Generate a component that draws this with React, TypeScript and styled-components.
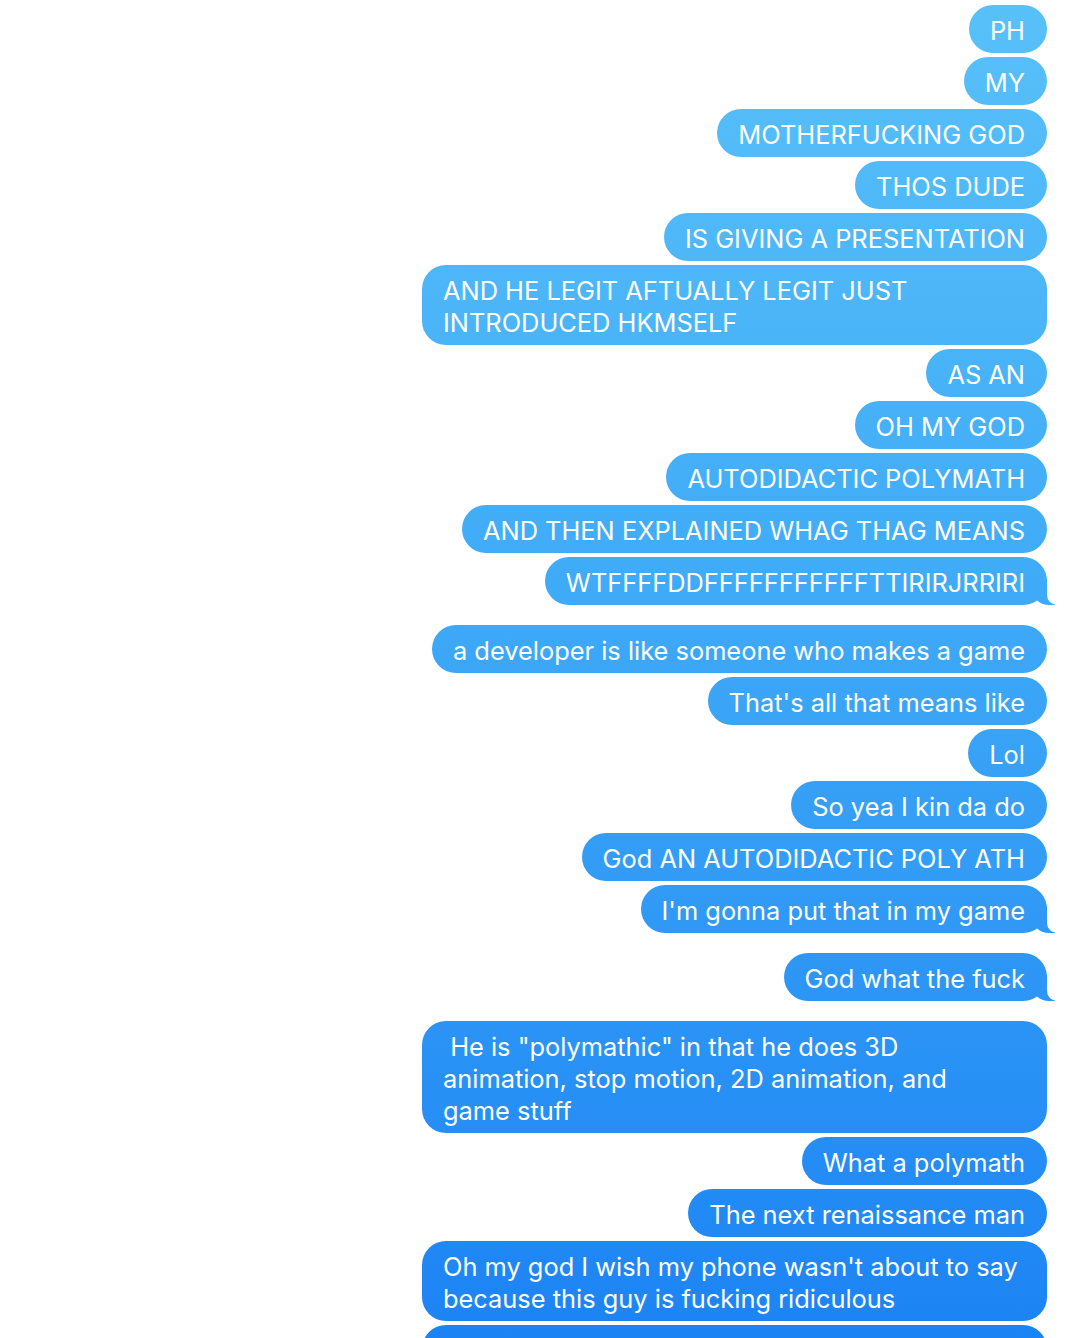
import React from "react";
import styled, { createGlobalStyle, css } from "styled-components";

const Global = createGlobalStyle`
  html, body { margin: 0; padding: 0; background: #ffffff; }
  body { width: 1072px; height: 1338px; overflow: hidden; }
`;

const Thread = styled.div`
  display: flex;
  flex-direction: column;
  align-items: flex-end;
  gap: 4px;
  padding: 5px 25px 0 0;
  width: 1072px;
  box-sizing: border-box;
`;

const bubbleFill = css`
  background-image: linear-gradient(180deg, #58c1f9 0px, #3ea9f7 620px, #1c83f4 1338px);
  background-attachment: fixed;
`;

const Bubble = styled.div<{ $tail?: boolean; $wide?: boolean }>`
  position: relative;
  box-sizing: border-box;
  ${bubbleFill};
  color: #ffffff;
  font-family: "Inter", "Roboto", sans-serif;
  font-size: 25.4px;
  line-height: 32px;
  white-space: pre;
  padding: 10px 22px 6px 21px;
  min-height: 48px;
  border-radius: 24px;
  ${(p) => p.$wide && css`width: 625px;`}
  ${(p) =>
    p.$tail &&
    css`
      margin-bottom: 16px;
      &::before {
        content: "";
        position: absolute;
        bottom: 0;
        right: -8px;
        width: 22px;
        height: 26px;
        ${bubbleFill};
        border-bottom-left-radius: 16px 14px;
      }
      &::after {
        content: "";
        position: absolute;
        bottom: 0;
        right: -26px;
        width: 26px;
        height: 27px;
        background: #ffffff;
        border-bottom-left-radius: 10px;
      }
    `}
`;

type Msg = { text: string; tail?: boolean; wide?: boolean };

const messages: Msg[] = [
  { text: "PH" },
  { text: "MY" },
  { text: "MOTHERFUCKING GOD" },
  { text: "THOS DUDE" },
  { text: "IS GIVING A PRESENTATION" },
  { text: "AND HE LEGIT AFTUALLY LEGIT JUST\nINTRODUCED HKMSELF", wide: true },
  { text: "AS AN" },
  { text: "OH MY GOD" },
  { text: "AUTODIDACTIC POLYMATH" },
  { text: "AND THEN EXPLAINED WHAG THAG MEANS" },
  { text: "WTFFFFDDFFFFFFFFFFFTTIRIRJRRIRI", tail: true },
  { text: "a developer is like someone who makes a game" },
  { text: "That's all that means like" },
  { text: "Lol" },
  { text: "So yea I kin da do" },
  { text: "God AN AUTODIDACTIC POLY ATH" },
  { text: "I'm gonna put that in my game", tail: true },
  { text: "God what the fuck", tail: true },
  {
    text: ' He is "polymathic" in that he does 3D\nanimation, stop motion, 2D animation, and\ngame stuff',
    wide: true,
  },
  { text: "What a polymath" },
  { text: "The next renaissance man" },
  {
    text: "Oh my god I wish my phone wasn't about to say\nbecause this guy is fucking ridiculous",
    wide: true,
  },
  { text: "", wide: true },
];

export default function App() {
  return (
    <>
      <Global />
      <Thread>
        {messages.map((m, i) => (
          <Bubble key={i} $tail={m.tail} $wide={m.wide}>
            {m.text}
          </Bubble>
        ))}
      </Thread>
    </>
  );
}
